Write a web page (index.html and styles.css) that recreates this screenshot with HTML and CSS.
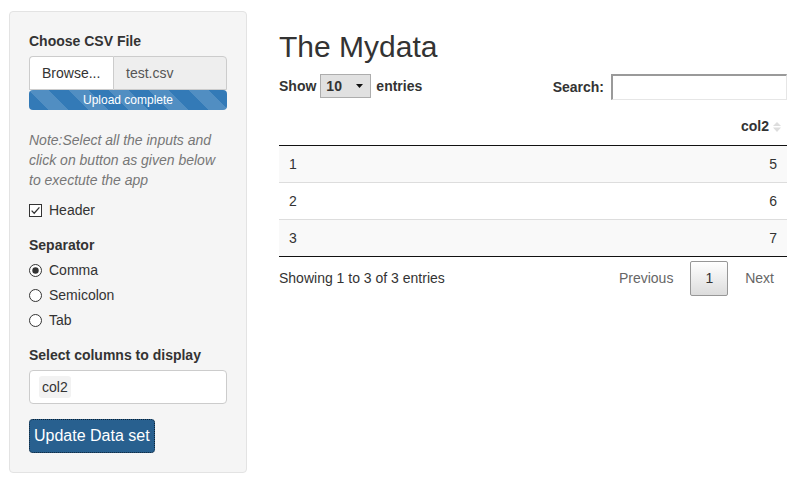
FILE: index.html
```html
<!DOCTYPE html>
<html>
<head>
<meta charset="utf-8">
<link rel="stylesheet" href="styles.css">
</head>
<body>
<div class="page">
  <aside class="well">
    <label class="ctl-label">Choose CSV File</label>
    <div class="input-group">
      <span class="btn-browse">Browse...</span>
      <span class="file-name">test.csv</span>
    </div>
    <div class="progress">Upload complete</div>

    <p class="note">Note:Select all the inputs and<br>click on button as given below<br>to exectute the app</p>

    <div class="option first-check">
      <svg class="box" width="13" height="13" viewBox="0 0 13 13"><rect x="0.5" y="0.5" width="12" height="12" fill="#fff" stroke="#333"/><path d="M2.6 6.6 L5.2 9.2 L10.4 3.4" fill="none" stroke="#333" stroke-width="1.3"/></svg>
      <span>Header</span>
    </div>

    <label class="ctl-label sep">Separator</label>
    <div class="option radio">
      <svg class="box" width="13" height="13" viewBox="0 0 13 13"><circle cx="6.5" cy="6.5" r="6" fill="#fff" stroke="#333"/><circle cx="6.5" cy="6.5" r="3.2" fill="#333"/></svg>
      <span>Comma</span>
    </div>
    <div class="option radio">
      <svg class="box" width="13" height="13" viewBox="0 0 13 13"><circle cx="6.5" cy="6.5" r="6" fill="#fff" stroke="#333"/></svg>
      <span>Semicolon</span>
    </div>
    <div class="option radio">
      <svg class="box" width="13" height="13" viewBox="0 0 13 13"><circle cx="6.5" cy="6.5" r="6" fill="#fff" stroke="#333"/></svg>
      <span>Tab</span>
    </div>

    <label class="ctl-label sep">Select columns to display</label>
    <div class="selectize"><span class="item">col2</span></div>

    <button class="update">Update Data set</button>
  </aside>

  <main class="main">
    <h2 class="title">The Mydata</h2>
    <div class="controls">
      <div class="length">
        <span>Show</span>
        <span class="select"><span>10</span><svg width="7" height="4" viewBox="0 0 7 4"><path d="M0 0 H7 L3.5 4 Z" fill="#111"/></svg></span>
        <span>entries</span>
      </div>
      <div class="search">
        <span>Search:</span>
        <span class="search-input"></span>
      </div>
    </div>

    <table class="data">
      <thead>
        <tr><th class="c1"></th><th class="c2"><span>col2</span><svg width="8" height="10" viewBox="0 0 8 10"><path d="M4 0 L8 4 H0 Z" fill="#ddd"/><path d="M4 10 L8 5.5 H0 Z" fill="#ddd"/></svg></th></tr>
      </thead>
      <tbody>
        <tr class="odd"><td class="c1">1</td><td class="c2">5</td></tr>
        <tr><td class="c1">2</td><td class="c2">6</td></tr>
        <tr class="odd"><td class="c1">3</td><td class="c2">7</td></tr>
      </tbody>
    </table>

    <div class="footer">
      <div class="info">Showing 1 to 3 of 3 entries</div>
      <div class="paginate">
        <span class="pbtn disabled">Previous</span>
        <span class="pbtn current">1</span>
        <span class="pbtn disabled next">Next</span>
      </div>
    </div>
  </main>
</div>
</body>
</html>
```

FILE: styles.css
```css
* { box-sizing: border-box; }

html, body {
  margin: 0;
  padding: 0;
  background: #fff;
}

body {
  font-family: "Liberation Sans", Arial, sans-serif;
  font-size: 14px;
  line-height: 20px;
  color: #333;
}

.page {
  display: flex;
  align-items: flex-start;
  padding-left: 9px;
  gap: 32px;
}

/* Sidebar */
.well {
  width: 238px;
  margin-top: 11px;
  padding: 19px;
  background: #f5f5f5;
  border: 1px solid #e3e3e3;
  border-radius: 4px;
  display: flex;
  flex-direction: column;
}

.ctl-label {
  display: block;
  font-weight: bold;
  margin-bottom: 5px;
}

.ctl-label.sep {
  margin-top: 15px;
}

.input-group {
  display: flex;
  height: 34px;
}

.btn-browse {
  width: 84px;
  padding: 6px 12px;
  background: #fff;
  border: 1px solid #ccc;
  border-right: none;
  border-radius: 4px 0 0 0;
  color: #333;
}

.file-name {
  flex: 1;
  padding: 6px 12px;
  background: #eee;
  border: 1px solid #ccc;
  border-radius: 0 4px 0 0;
  color: #555;
}

.progress {
  height: 20px;
  border-radius: 4px;
  background-color: #337ab7;
  background-image: linear-gradient(45deg,
    rgba(255,255,255,.15) 25%, transparent 25%,
    transparent 50%, rgba(255,255,255,.15) 50%,
    rgba(255,255,255,.15) 75%, transparent 75%, transparent);
  background-size: 40px 40px;
  color: #fff;
  font-size: 12px;
  line-height: 20px;
  text-align: center;
}

.note {
  margin: 20px 0 0 0;
  font-style: italic;
  color: #777;
}

.option {
  display: flex;
  align-items: center;
  gap: 7px;
  height: 20px;
}

.first-check {
  margin-top: 10px;
}

.radio {
  margin-top: 5px;
}

.ctl-label.sep + .radio {
  margin-top: 0;
}

.selectize {
  height: 34px;
  background: #fff;
  border: 1px solid #ccc;
  border-radius: 4px;
  padding: 5px 9px;
  display: flex;
  align-items: center;
}

.item {
  background: #f2f2f2;
  border-radius: 3px;
  padding: 1px 3px;
  line-height: 20px;
  color: #333;
}

.update {
  align-self: flex-start;
  margin-top: 15px;
  height: 34px;
  padding: 0 4px;
  font-family: "Liberation Sans", Arial, sans-serif;
  font-size: 16px;
  color: #fff;
  background: #28608f;
  border: 1px dotted #0c2133;
  border-radius: 4px;
}

/* Main */
.main {
  width: 508px;
}

.title {
  margin: 30px 0 0 0;
  font-size: 30px;
  line-height: 33px;
  font-weight: normal;
  color: #333;
}

.controls {
  display: flex;
  justify-content: space-between;
  align-items: flex-start;
  margin-top: 11px;
  font-weight: bold;
}

.length {
  display: flex;
  align-items: center;
  height: 24px;
}

.select {
  display: flex;
  align-items: center;
  justify-content: space-between;
  width: 51px;
  height: 24px;
  margin: 0 5px 0 4px;
  padding: 0 7px 0 5px;
  background: #e1e1e1;
  border: 1px solid #adadad;
}

.search {
  display: flex;
  align-items: center;
  gap: 7px;
  height: 26px;
}

.search-input {
  display: block;
  width: 176px;
  height: 26px;
  background: #fff;
  border-top: 2px solid #9a9a9a;
  border-left: 2px solid #9a9a9a;
  border-right: 1px solid #e6e6e6;
  border-bottom: 1px solid #e6e6e6;
}

.data {
  width: 100%;
  margin-top: 8px;
  border-collapse: collapse;
  border-bottom: 1px solid #111;
}

.data th {
  padding: 8px 10px;
  font-weight: bold;
  border-bottom: 1px solid #111;
  height: 37px;
}

.data th.c2 {
  text-align: right;
  padding-right: 6px;
  white-space: nowrap;
}

.data th.c2 svg {
  margin-left: 4px;
  vertical-align: -1px;
}

.data td {
  padding: 8px 10px;
  height: 37px;
  border-top: 1px solid #ddd;
}

.data tbody tr:first-child td {
  border-top: none;
  height: 36px;
}

.data tr.odd td {
  background: #f9f9f9;
}

.data td.c1 { text-align: left; }
.data td.c2 { text-align: right; }

.footer {
  display: flex;
  justify-content: space-between;
  align-items: center;
  margin-top: 4px;
}

.paginate {
  display: flex;
  align-items: center;
}

.pbtn {
  display: block;
  margin-left: 2px;
  padding: 7px 14px;
  line-height: 19px;
  border: 1px solid transparent;
  border-radius: 2px;
}

.pbtn.next {
  padding-right: 12px;
}

.pbtn.disabled {
  color: #666;
}

.pbtn.current {
  color: #333;
  border: 1px solid #979797;
  background: linear-gradient(to bottom, #fff 0%, #dcdcdc 100%);
}
```
